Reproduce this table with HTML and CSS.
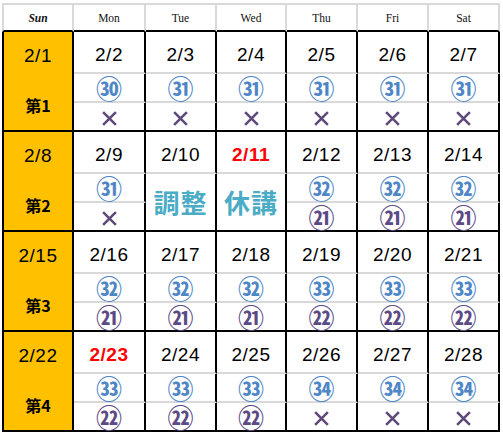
FILE: index.html
```html
<!DOCTYPE html>
<html lang="ja">
<head>
<meta charset="utf-8">
<title>2月 予定表</title>
<link rel="stylesheet" href="styles.css">
</head>
<body>
<div class="cal">
  <div class="hd sun">Sun</div>
  <div class="hd">Mon</div>
  <div class="hd">Tue</div>
  <div class="hd">Wed</div>
  <div class="hd">Thu</div>
  <div class="hd">Fri</div>
  <div class="hd">Sat</div>

  <!-- week 1 -->
  <div class="sd">2/1</div>
  <div class="d">2/2</div>
  <div class="d">2/3</div>
  <div class="d">2/4</div>
  <div class="d">2/5</div>
  <div class="d">2/6</div>
  <div class="d">2/7</div>
  <div class="sl">第1</div>
  <div class="c"><span class="n b">㉚</span></div>
  <div class="c"><span class="n b">㉛</span></div>
  <div class="c"><span class="n b">㉛</span></div>
  <div class="c"><span class="n b">㉛</span></div>
  <div class="c"><span class="n b">㉛</span></div>
  <div class="c"><span class="n b">㉛</span></div>
  <div class="x"><svg class="cross" viewBox="0 0 16 16"><path d="M2 2L14 14M14 2L2 14"/></svg></div>
  <div class="x"><svg class="cross" viewBox="0 0 16 16"><path d="M2 2L14 14M14 2L2 14"/></svg></div>
  <div class="x"><svg class="cross" viewBox="0 0 16 16"><path d="M2 2L14 14M14 2L2 14"/></svg></div>
  <div class="x"><svg class="cross" viewBox="0 0 16 16"><path d="M2 2L14 14M14 2L2 14"/></svg></div>
  <div class="x"><svg class="cross" viewBox="0 0 16 16"><path d="M2 2L14 14M14 2L2 14"/></svg></div>
  <div class="x"><svg class="cross" viewBox="0 0 16 16"><path d="M2 2L14 14M14 2L2 14"/></svg></div>

  <!-- week 2 -->
  <div class="sd">2/8</div>
  <div class="d">2/9</div>
  <div class="d">2/10</div>
  <div class="d red">2/11</div>
  <div class="d">2/12</div>
  <div class="d">2/13</div>
  <div class="d">2/14</div>
  <div class="sl">第2</div>
  <div class="c"><span class="n b">㉛</span></div>
  <div class="m">調整</div>
  <div class="m">休講</div>
  <div class="c"><span class="n b">㉜</span></div>
  <div class="c"><span class="n b">㉜</span></div>
  <div class="c"><span class="n b">㉜</span></div>
  <div class="x"><svg class="cross" viewBox="0 0 16 16"><path d="M2 2L14 14M14 2L2 14"/></svg></div>
  <div class="x"><span class="n p">㉑</span></div>
  <div class="x"><span class="n p">㉑</span></div>
  <div class="x"><span class="n p">㉑</span></div>

  <!-- week 3 -->
  <div class="sd">2/15</div>
  <div class="d">2/16</div>
  <div class="d">2/17</div>
  <div class="d">2/18</div>
  <div class="d">2/19</div>
  <div class="d">2/20</div>
  <div class="d">2/21</div>
  <div class="sl">第3</div>
  <div class="c"><span class="n b">㉜</span></div>
  <div class="c"><span class="n b">㉜</span></div>
  <div class="c"><span class="n b">㉜</span></div>
  <div class="c"><span class="n b">㉝</span></div>
  <div class="c"><span class="n b">㉝</span></div>
  <div class="c"><span class="n b">㉝</span></div>
  <div class="x"><span class="n p">㉑</span></div>
  <div class="x"><span class="n p">㉑</span></div>
  <div class="x"><span class="n p">㉑</span></div>
  <div class="x"><span class="n p">㉒</span></div>
  <div class="x"><span class="n p">㉒</span></div>
  <div class="x"><span class="n p">㉒</span></div>

  <!-- week 4 -->
  <div class="sd">2/22</div>
  <div class="d red">2/23</div>
  <div class="d">2/24</div>
  <div class="d">2/25</div>
  <div class="d">2/26</div>
  <div class="d">2/27</div>
  <div class="d">2/28</div>
  <div class="sl">第4</div>
  <div class="c"><span class="n b">㉝</span></div>
  <div class="c"><span class="n b">㉝</span></div>
  <div class="c"><span class="n b">㉝</span></div>
  <div class="c"><span class="n b">㉞</span></div>
  <div class="c"><span class="n b">㉞</span></div>
  <div class="c"><span class="n b">㉞</span></div>
  <div class="x"><span class="n p">㉒</span></div>
  <div class="x"><span class="n p">㉒</span></div>
  <div class="x"><span class="n p">㉒</span></div>
  <div class="x"><svg class="cross" viewBox="0 0 16 16"><path d="M2 2L14 14M14 2L2 14"/></svg></div>
  <div class="x"><svg class="cross" viewBox="0 0 16 16"><path d="M2 2L14 14M14 2L2 14"/></svg></div>
  <div class="x"><svg class="cross" viewBox="0 0 16 16"><path d="M2 2L14 14M14 2L2 14"/></svg></div>
</div>
</body>
</html>
```

FILE: styles.css
```css
* { box-sizing: border-box; }

body {
  margin: 0;
  background: #fff;
  font-family: "Liberation Sans", "Noto Sans CJK JP", sans-serif;
}

.cal {
  display: grid;
  grid-template-columns: 72px 72px 71px 70px 71px 71px 71px;
  grid-template-rows: 29px repeat(4, 42px 29px 29px);
  margin: 3px 0 0 2px;
  width: 498px;
}

.cal > div {
  display: flex;
  align-items: center;
  justify-content: center;
}

.hd {
  border-top: 2px solid #d9d9d9;
  border-right: 2px solid #d9d9d9;
  border-bottom: 2px solid #000;
  font-family: "Liberation Serif", serif;
  font-size: 11.5px;
  color: #111;
  padding-top: 1px;
}

.hd.sun {
  border-left: 2px solid #d9d9d9;
  font-style: italic;
  font-weight: bold;
}

.sd {
  background: #ffc000;
  border-left: 2px solid #000;
  border-right: 2px solid #000;
  font-size: 19px;
  letter-spacing: 0.5px;
  padding-top: 5px;
}

.sl {
  grid-row: span 2;
  background: #ffc000;
  border-left: 2px solid #000;
  border-right: 2px solid #000;
  border-bottom: 2px solid #000;
  font-family: "Noto Sans CJK JP", sans-serif;
  font-weight: bold;
  font-size: 16px;
  padding-top: 6px;
}

.d {
  border-right: 2px solid #000;
  border-bottom: 2px solid #d9d9d9;
  font-size: 19px;
  letter-spacing: 0.5px;
  color: #000;
  padding-top: 5px;
}

.d.red {
  color: #ff0000;
  font-weight: bold;
}

.c {
  border-right: 2px solid #000;
  border-bottom: 2px solid #d9d9d9;
}

.x {
  border-right: 2px solid #000;
  border-bottom: 2px solid #000;
}

.m {
  grid-row: span 2;
  border-right: 2px solid #000;
  border-bottom: 2px solid #000;
  font-family: "Noto Sans CJK JP", sans-serif;
  font-weight: bold;
  font-size: 26px;
  color: #4bacc6;
  letter-spacing: 1px;
  padding-bottom: 2px;
}

.n {
  font-family: "Noto Sans CJK JP", sans-serif;
  font-weight: bold;
  font-size: 26px;
  line-height: 26px;
  display: block;
}

.n.b { color: #4f86c6; }
.n.p { color: #5c4a85; }

.cross {
  width: 17px;
  height: 17px;
  margin-top: 3px;
  fill: none;
  stroke: #5f497a;
  stroke-width: 2.4;
}
```
